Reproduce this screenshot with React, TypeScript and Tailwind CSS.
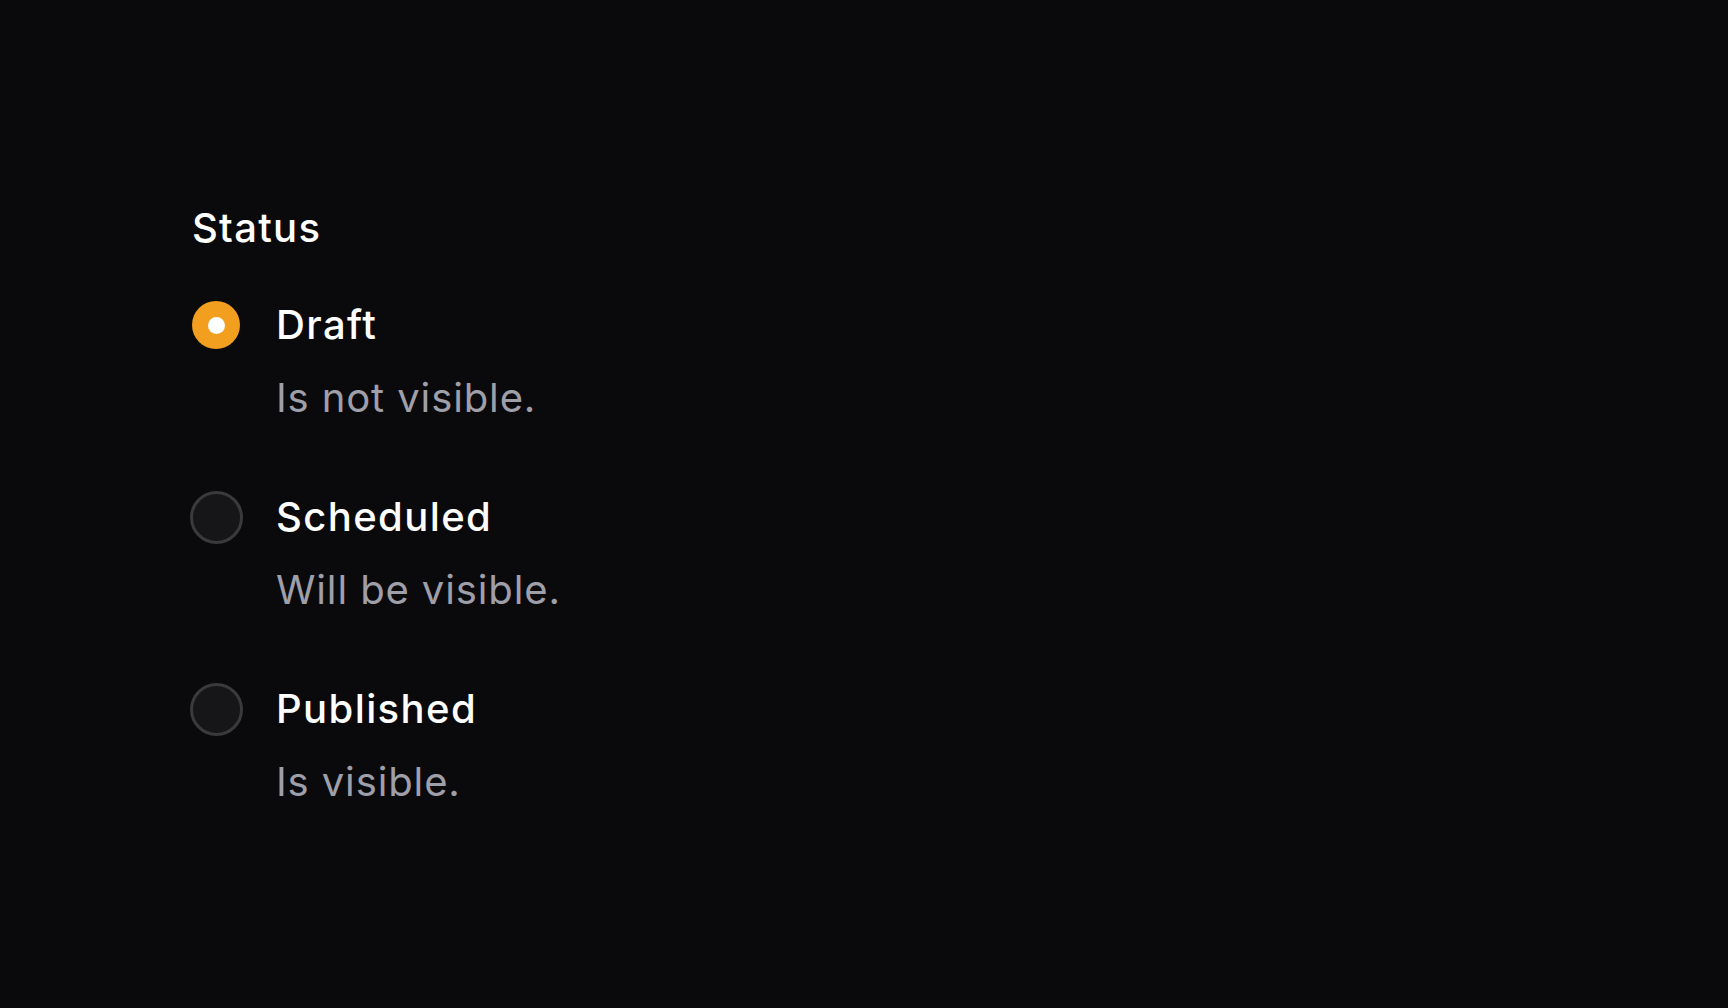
import React from "react";

type Opt = { id: string; title: string; desc: string };

const options: Opt[] = [
  { id: "draft", title: "Draft", desc: "Is not visible." },
  { id: "scheduled", title: "Scheduled", desc: "Will be visible." },
  { id: "published", title: "Published", desc: "Is visible." },
];

function Radio({ checked }: { checked: boolean }) {
  return (
    <div className="flex h-[60px] w-[48px] items-center justify-center">
      {checked ? (
        <div className="flex h-[48px] w-[48px] shrink-0 items-center justify-center rounded-full bg-[#f29e1f]">
          <div className="h-[17px] w-[17px] rounded-full bg-white" />
        </div>
      ) : (
        <div className="h-[53px] w-[53px] shrink-0 rounded-full border-[3px] border-[#3a3a3d] bg-[#161618]" />
      )}
    </div>
  );
}

export default function App() {
  const [value, setValue] = React.useState("draft");
  return (
    <div
      className="min-h-screen w-full bg-[#0a0a0c] pl-[192px] pt-[198px] text-white"
      style={{ fontFamily: "Inter, 'Noto Sans', sans-serif" }}
    >
      <div className="text-[40px] font-medium leading-[60px] tracking-[0.032em]">Status</div>
      <div className="mt-[37px] flex flex-col gap-[59px]">
        {options.map((o) => (
          <div
            key={o.id}
            className="grid cursor-pointer grid-cols-[48px_1fr] gap-x-[36px] gap-y-[13px]"
            onClick={() => setValue(o.id)}
          >
            <Radio checked={value === o.id} />
            <div className="text-[40px] font-medium leading-[60px] tracking-[0.035em] text-white">
              {o.title}
            </div>
            <div />
            <div className="text-[40px] font-normal leading-[60px] tracking-[0.022em] text-[#9f9fa9]">
              {o.desc}
            </div>
          </div>
        ))}
      </div>
    </div>
  );
}
